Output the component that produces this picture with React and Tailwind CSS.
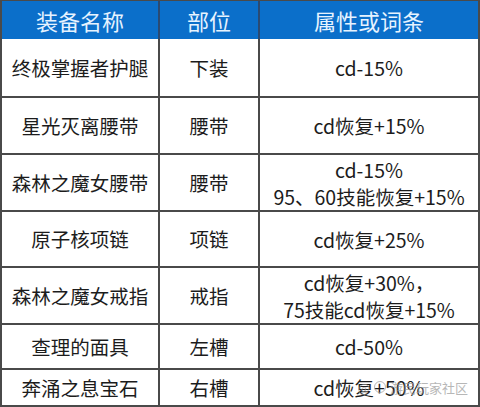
const rows = [
  { name: "终极掌握者护腿", slot: "下装", attr: ["cd-15%"], h: "h-[57px]" },
  { name: "星光灭离腰带", slot: "腰带", attr: ["cd恢复+15%"], h: "h-[57px]" },
  { name: "森林之魔女腰带", slot: "腰带", attr: ["cd-15%", "95、60技能恢复+15%"], h: "h-[57px]" },
  { name: "原子核项链", slot: "项链", attr: ["cd恢复+25%"], h: "h-[56px]" },
  { name: "森林之魔女戒指", slot: "戒指", attr: ["cd恢复+30%，", "75技能cd恢复+15%"], h: "h-[57px]" },
  { name: "查理的面具", slot: "左槽", attr: ["cd-50%"], h: "h-[45px]" },
  { name: "奔涌之息宝石", slot: "右槽", attr: ["cd恢复+50%"], h: "h-[37px]" },
]

const font = { fontFamily: '"Noto Sans CJK SC", "Noto Sans", sans-serif' }

export default function App() {
  return (
    <div className="w-[480px] h-[407px] bg-white" style={font}>
      <div className="relative w-[480px] border-t border-x-2 border-b-2 border-[#4a4a4a]">
        {/* header */}
        <div className="grid grid-cols-[158px_100px_1fr] h-[38px] bg-[#0b6fca] text-[#e6f3ff] text-[22px]">
          <div className="flex items-center justify-center border-r-2 border-[#2a4a73]">装备名称</div>
          <div className="flex items-center justify-center border-r-2 border-[#2a4a73]">部位</div>
          <div className="flex items-center justify-center">属性或词条</div>
        </div>

        {rows.map((r, i) => (
          <div
            key={i}
            className={`grid grid-cols-[158px_100px_1fr] ${r.h} text-[19.5px] text-[#1c1c1c] ${i > 0 ? "border-t-2 border-[#4a4a4a]" : ""}`}
          >
            <div className="flex items-center justify-center border-r-2 border-[#4a4a4a]">{r.name}</div>
            <div className="flex items-center justify-center border-r-2 border-[#4a4a4a]">{r.slot}</div>
            <div className="flex flex-col items-center justify-center leading-[27px]">
              {r.attr.map((a, j) => (
                <span key={j}>{a}</span>
              ))}
            </div>
          </div>
        ))}

        {/* watermark */}
        <div className="absolute right-[10px] bottom-[8px] flex items-center gap-1 text-[13px] text-[#9a9a9a] opacity-70">
          <span>@</span>
          <span className="w-[12px] h-[12px] rounded-full border border-[#9a9a9a]"></span>
          <span>游民玩家社区</span>
        </div>
      </div>
    </div>
  )
}
